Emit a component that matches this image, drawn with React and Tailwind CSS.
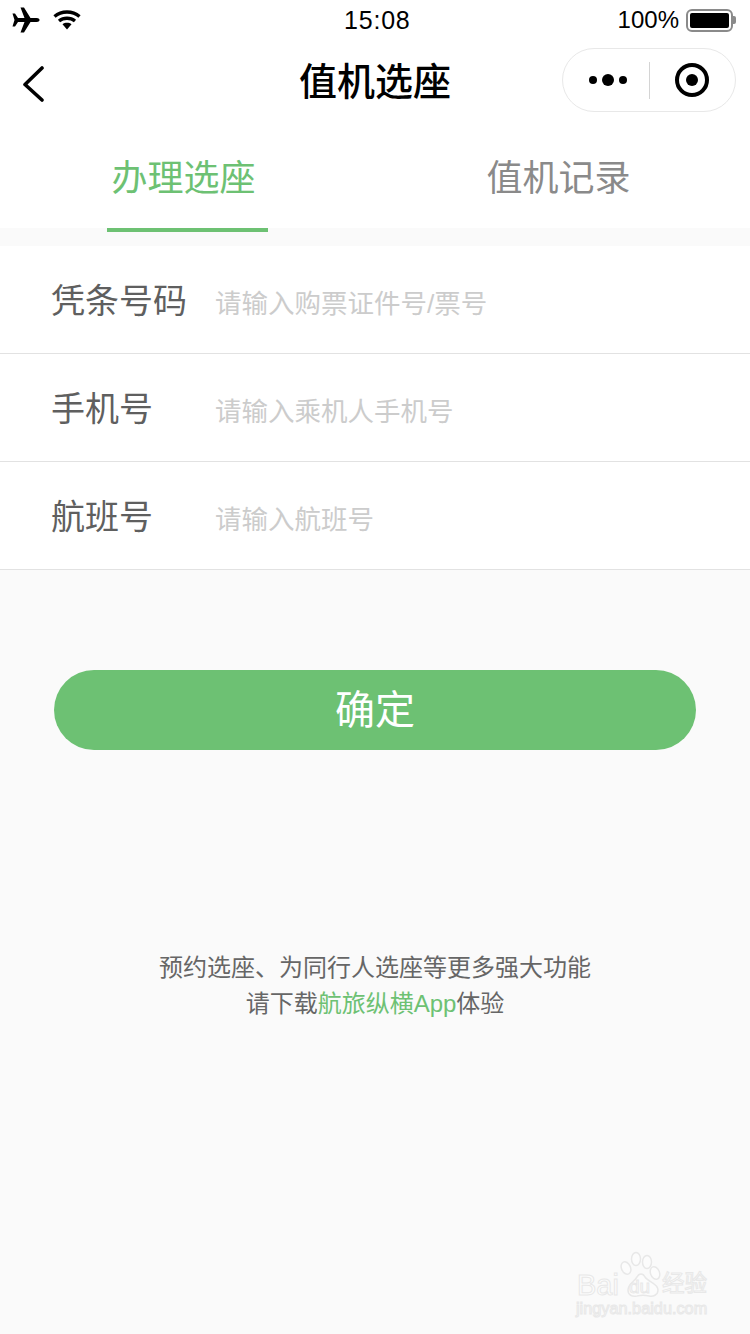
const cjk = "font-['Liberation_Sans','Noto_Sans_CJK_SC',sans-serif]";

function Plane() {
	return (
		<svg width="28" height="26" viewBox="0 0 28 26" fill="black">
			<path d="M0.5 6.5 L3 6.5 L6 11 L12.5 11 L8.5 0.5 L12 0.5 L18.5 11 L24.5 11 C27 11 27.5 12.2 27.5 13 C27.5 13.8 27 15 24.5 15 L18.5 15 L12 25.5 L8.5 25.5 L12.5 15 L6 15 L3 19.5 L0.5 19.5 L2.5 13 Z" />
		</svg>
	);
}

function Wifi() {
	return (
		<svg width="28" height="20" viewBox="0 0 28 20" fill="none" stroke="black" strokeWidth="3.4">
			<path d="M1.5 6.5 C8.5 0.5 19.5 0.5 26.5 6.5" />
			<path d="M6 11 C10.5 7.3 17.5 7.3 22 11" />
			<path d="M9.5 14.2 L14 19.5 L18.5 14.2 C16 12.3 12 12.3 9.5 14.2 Z" fill="black" stroke="none" />
		</svg>
	);
}

function Row({ label, placeholder }) {
	return (
		<div className="flex items-center h-[108px] bg-white border-b border-[#e2e2e2] pl-[51px]">
			<div className="w-[164px] text-[34px] leading-[44px] text-[#5f5f5f] mt-[2px]">{label}</div>
			<div className="text-[26.5px] leading-[36px] text-[#cccccc] mt-[8px]">{placeholder}</div>
		</div>
	);
}

function App() {
	return (
		<div className={`${cjk} relative w-[750px] h-[1334px] overflow-hidden bg-[#fafafa]`}>
			{/* status bar */}
			<div className="relative flex items-center justify-between h-[40px] bg-white pl-[12px] pr-[14px]">
				<div className="flex items-center gap-[13px]">
					<Plane />
					<Wifi />
				</div>
				<div className="absolute left-[344px] top-[5px] text-[25px] leading-[30px] tracking-[0.8px] font-medium text-black">15:08</div>
				<div className="flex items-center">
					<span className="text-[24px] leading-[30px] text-black mr-[7px]">100%</span>
					<div className="w-[47px] h-[23px] border-2 border-[#8a8a8a] rounded-[6px] p-[2px]">
						<div className="w-full h-full bg-black rounded-[2px]"></div>
					</div>
					<div className="w-[3px] h-[8px] bg-[#8a8a8a] rounded-r-[2px]"></div>
				</div>
			</div>

			{/* nav bar */}
			<div className="relative flex items-center justify-center h-[88px] bg-white">
				<svg className="absolute left-[22px] top-[26px]" width="24" height="36" viewBox="0 0 24 36" fill="none" stroke="black" strokeWidth="3.6" strokeLinecap="round" strokeLinejoin="round">
					<path d="M20 2 L3 18.5 L20 34" />
				</svg>
				<div className="text-[38px] leading-[48px] font-medium text-black mt-[-4px]">值机选座</div>
				<div className="absolute left-[562px] top-[8px] flex items-center w-[174px] h-[64px] rounded-full border border-[#e8e8e8] bg-white">
					<div className="flex items-center justify-center gap-[5px] w-[86px] pl-[3px]">
						<span className="w-[8px] h-[8px] rounded-full bg-black"></span>
						<span className="w-[12px] h-[12px] rounded-full bg-black"></span>
						<span className="w-[8px] h-[8px] rounded-full bg-black"></span>
					</div>
					<div className="w-px h-[37px] bg-[#d4d4d4]"></div>
					<div className="flex items-center justify-center w-[84px]">
						<div className="flex items-center justify-center w-[34px] h-[34px] rounded-full border-[4px] border-black">
							<span className="w-[12px] h-[12px] rounded-full bg-black"></span>
						</div>
					</div>
				</div>
			</div>

			{/* tabs */}
			<div className="relative flex h-[100px] bg-white">
				<div className="relative w-[367px] text-center">
					<div className="text-[36px] leading-[102px] text-[#6dc173]">办理选座</div>
					<div className="absolute left-[107px] top-[100px] w-[161px] h-[4px] bg-[#6dc173]"></div>
				</div>
				<div className="w-[383px] text-center text-[36px] leading-[102px] text-[#8a8a8a]">值机记录</div>
			</div>

			{/* form */}
			<div className="mt-[18px]">
				<Row label="凭条号码" placeholder="请输入购票证件号/票号" />
				<Row label="手机号" placeholder="请输入乘机人手机号" />
				<Row label="航班号" placeholder="请输入航班号" />
			</div>

			<div className="flex items-center justify-center mx-[54px] mt-[100px] h-[80px] rounded-full bg-[#6dc173] text-[40px] text-white">确定</div>

			<div className="mt-[200px] text-center text-[24px] leading-[36px] text-[#666666]">
				<div>预约选座、为同行人选座等更多强大功能</div>
				<div>
					请下载<span className="text-[#6dc173]">航旅纵横App</span>体验
				</div>
			</div>

			{/* watermark */}
			<div className="absolute left-[575px] top-[1250px] w-[140px] h-[70px] text-[#fcfcfc] [-webkit-text-stroke:1px_#e8e8e8]">
				<div className="absolute left-[2px] top-[18px] text-[29px] leading-[34px]">Bai</div>
				<svg className="absolute left-[45px] top-0" width="42" height="50" viewBox="0 0 42 50" fill="#fcfcfc" stroke="#e8e8e8" strokeWidth="1.5">
					<ellipse cx="6" cy="18" rx="4.5" ry="6.5" transform="rotate(-25 6 18)" />
					<ellipse cx="16" cy="9" rx="4.5" ry="6.5" />
					<ellipse cx="27" cy="12" rx="4.5" ry="6.5" />
					<ellipse cx="35" cy="23" rx="4.5" ry="6.5" transform="rotate(-20 35 23)" />
					<path d="M8 40 C8 34 14 32 17 27 C19 23 23 23 25 27 C28 32 38 33 38 40 C38 45 33 47 29 46 C25 45 21 45 17 46 C12 47 8 45 8 40 Z" />
				</svg>
				<div className="absolute left-[54px] top-[30px] text-[19px] leading-[14px]">du</div>
				<div className="absolute left-[87px] top-[21px] text-[22.5px] leading-[26px] whitespace-nowrap">经验</div>
				<div className="absolute left-[1px] top-[49px] text-[16.3px] leading-[18px] whitespace-nowrap">jingyan.baidu.com</div>
			</div>
		</div>
	);
}

export default App;
